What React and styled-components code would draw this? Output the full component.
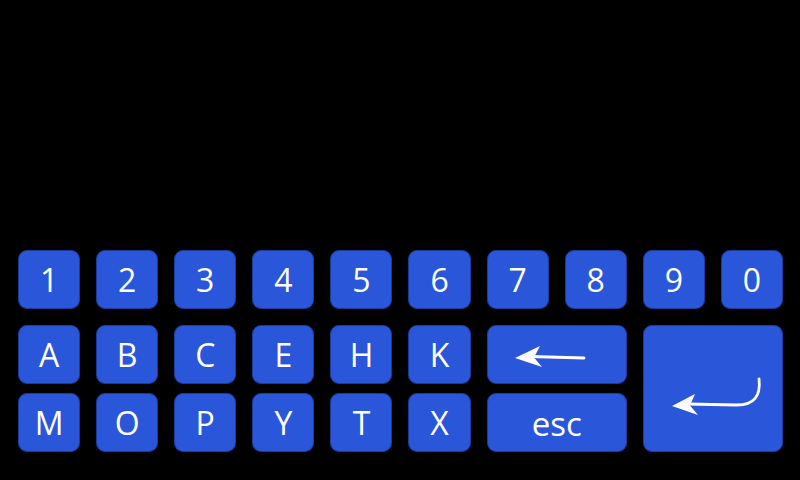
import React from "react";
import styled, { createGlobalStyle } from "styled-components";

const Global = createGlobalStyle`
  html, body { margin: 0; padding: 0; background: #000; }
  body { width: 800px; height: 480px; overflow: hidden; font-family: "Open Sans", "DejaVu Sans", sans-serif; }
`;

const Screen = styled.div`
  width: 800px;
  height: 480px;
  background: #000;
  display: flex;
  flex-direction: column;
  justify-content: flex-end;
  box-sizing: border-box;
  padding: 0 0 28px 18px;
  gap: 16px;
`;

const NumberRow = styled.div`
  width: 765px;
  display: grid;
  grid-template-columns: repeat(10, 1fr);
  grid-template-rows: 59px;
  column-gap: 16px;
`;

const LowerGrid = styled.div`
  width: 765px;
  display: grid;
  grid-template-columns: repeat(10, 1fr);
  grid-template-rows: 59px 59px;
  column-gap: 16px;
  row-gap: 9px;
`;

const Key = styled.div`
  box-sizing: border-box;
  background: #2a56d9;
  border: 1px solid #1c3a9c;
  border-radius: 9px;
  color: #fff;
  display: flex;
  align-items: center;
  justify-content: center;
  font-size: ${(p) => p.$fs || 32}px;
  line-height: 1;
  grid-column: ${(p) => p.$col || "auto"};
  grid-row: ${(p) => p.$row || "auto"};
  padding-top: ${(p) => p.$pt || 0}px;
  overflow: hidden;
`;

const Icon = styled.svg`
  display: block;
`;

const BackArrow = () => (
  <Icon width="138" height="57" viewBox="1 1 138 57">
    <path d="M44 31.5 L97 33" stroke="#fff" strokeWidth="2.8" fill="none" strokeLinecap="round" />
    <path d="M28 33 L53 21 L47 32.5 L55 42 Z" fill="#fff" />
  </Icon>
);

const EnterArrow = () => (
  <Icon width="138" height="124" viewBox="1 1 138 124">
    <path d="M116 53 C118 70 111 79 94 79 L44 78" stroke="#fff" strokeWidth="2.8" fill="none" strokeLinecap="round" />
    <path d="M29 80 L52 68 L47 79.5 L55 89 Z" fill="#fff" />
  </Icon>
);

const numbers = ["1", "2", "3", "4", "5", "6", "7", "8", "9", "0"];
const row2 = ["A", "B", "C", "E", "H", "K"];
const row3 = ["M", "O", "P", "Y", "T", "X"];

export default function App() {
  return (
    <>
      <Global />
      <Screen>
        <NumberRow>
          {numbers.map((n) => (
            <Key key={n}>{n}</Key>
          ))}
        </NumberRow>
        <LowerGrid>
          {row2.map((l, i) => (
            <Key key={l} $col={i + 1} $row={1}>{l}</Key>
          ))}
          <Key $col="7 / span 2" $row={1}><BackArrow /></Key>
          <Key $col="9 / span 2" $row="1 / span 2"><EnterArrow /></Key>
          {row3.map((l, i) => (
            <Key key={l} $col={i + 1} $row={2}>{l}</Key>
          ))}
          <Key $col="7 / span 2" $row={2} $fs={33} $pt={2}>esc</Key>
        </LowerGrid>
      </Screen>
    </>
  );
}
